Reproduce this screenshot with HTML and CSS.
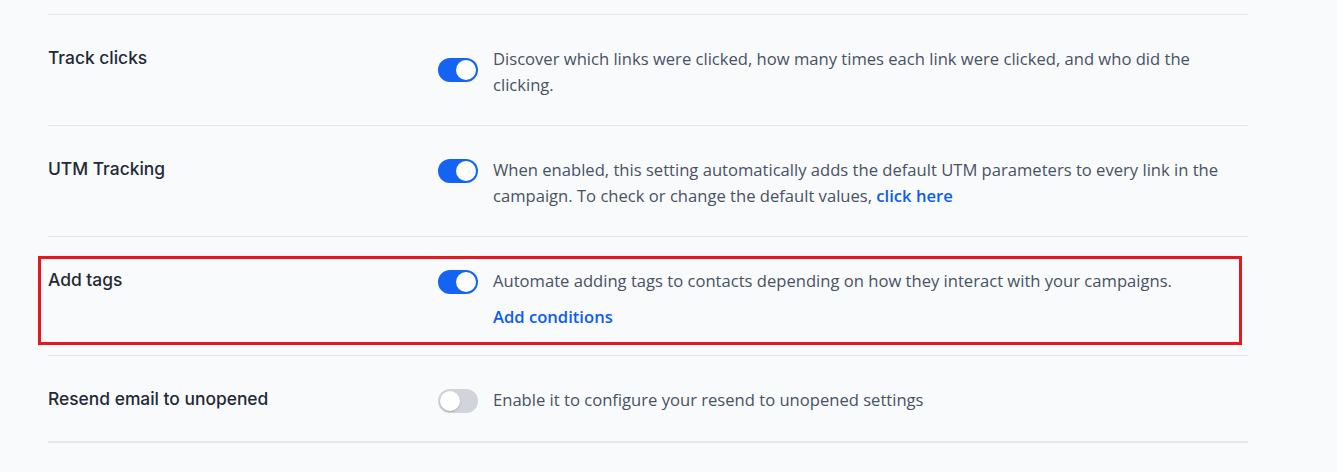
FILE: index.html
```html
<!DOCTYPE html>
<html lang="en">
<head>
    <meta charset="UTF-8">
    <meta name="viewport" content="width=device-width, initial-scale=1.0">
    <title>Campaign tracking settings</title>
    <link rel="stylesheet" href="styles.css">
</head>
<body>
    <div class="settings">
        <div class="setting-row">
            <div class="setting-label">Track clicks</div>
            <div class="setting-control centered">
                <label class="switch is-on"><span class="knob"></span></label>
                <div class="setting-text">
                    <p>Discover which links were clicked, how many times each link were clicked, and who did the clicking.</p>
                </div>
            </div>
        </div>

        <div class="setting-row">
            <div class="setting-label">UTM Tracking</div>
            <div class="setting-control">
                <label class="switch is-on"><span class="knob"></span></label>
                <div class="setting-text">
                    <p>When enabled, this setting automatically adds the default UTM parameters to every link in the campaign. To check or change the default values, <a href="#">click here</a></p>
                </div>
            </div>
        </div>

        <div class="setting-row highlighted">
            <div class="setting-label">Add tags</div>
            <div class="setting-control">
                <label class="switch is-on"><span class="knob"></span></label>
                <div class="setting-text">
                    <p>Automate adding tags to contacts depending on how they interact with your campaigns.</p>
                    <a href="#" class="action-link">Add conditions</a>
                </div>
            </div>
            <div class="highlight-box"></div>
        </div>

        <div class="setting-row">
            <div class="setting-label">Resend email to unopened</div>
            <div class="setting-control">
                <label class="switch"><span class="knob"></span></label>
                <div class="setting-text">
                    <p>Enable it to configure your resend to unopened settings</p>
                </div>
            </div>
        </div>
    </div>
</body>
</html>
```

FILE: styles.css
```css
body {
    margin: 0;
    background-color: #f9fafb;
    font-family: "Open Sans", "Noto Sans", Arial, sans-serif;
    color: #4b5563;
}
.settings {
    width: 1200px;
    margin-left: 48px;
    padding-top: 14px;
}
.setting-row {
    display: flex;
    align-items: flex-start;
    border-top: 1px solid #e5e7eb;
    padding: 32px 0 27px;
    position: relative;
}
.setting-row:last-child {
    padding-bottom: 28px;
    border-bottom: 2px solid #e5e7eb;
}
.setting-row.highlighted {
    padding-bottom: 25px;
}
.setting-label {
    width: 390px;
    flex-shrink: 0;
    font-family: Inter, "Open Sans", sans-serif;
    font-size: 17.4px;
    font-weight: 500;
    line-height: 26px;
    color: #1f2937;
    margin-top: -2px;
}
.setting-control {
    flex: 1;
    display: flex;
    align-items: flex-start;
    gap: 15px;
}
.setting-control.centered {
    align-items: center;
}
.switch {
    width: 40px;
    height: 24px;
    flex-shrink: 0;
    border-radius: 12px;
    background-color: #d1d5db;
    position: relative;
    margin-top: 1px;
}
.setting-control.centered .switch {
    margin-top: -5px;
}
.switch .knob {
    position: absolute;
    top: 2px;
    left: 2px;
    width: 20px;
    height: 20px;
    border-radius: 50%;
    background: white;
    box-shadow: 0 1px 2px rgba(0, 0, 0, 0.2);
}
.switch.is-on {
    background-color: #1463f3;
}
.switch.is-on .knob {
    left: 18px;
    box-shadow: none;
}
.setting-text {
    flex: 1;
    font-size: 16.6px;
    line-height: 26px;
    color: #475264;
    margin-top: -1px;
}
.setting-text p {
    margin: 0;
}
.setting-text a {
    color: #0b5cf5;
    font-weight: 600;
    text-decoration: none;
}
.action-link {
    display: inline-block;
    margin-top: 10px;
}
.highlight-box {
    position: absolute;
    top: 19px;
    left: -10px;
    right: 6px;
    bottom: 10px;
    border: 3px solid #e8161f;
    pointer-events: none;
}
```
